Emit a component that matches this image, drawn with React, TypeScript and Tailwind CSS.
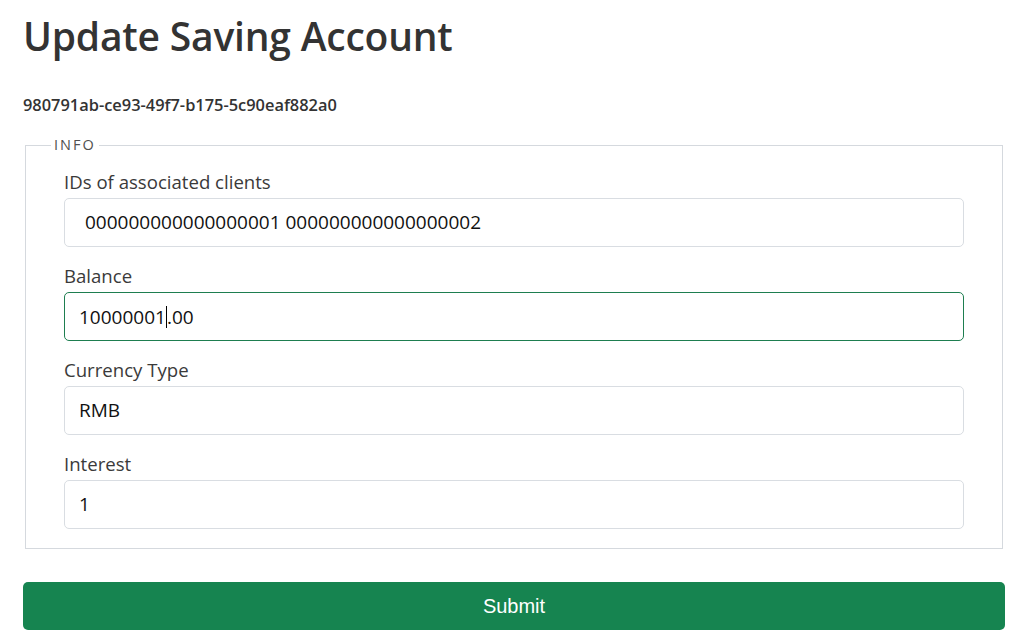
import React from 'react';

const fields = [
  { id: 'clients', label: 'IDs of associated clients', value: '000000000000000001 000000000000000002', indent: true },
  { id: 'balance', label: 'Balance', value: '10000001.00', focused: true },
  { id: 'currency', label: 'Currency Type', value: 'RMB' },
  { id: 'interest', label: 'Interest', value: '1' },
];

export default function App() {
  return (
    <div
      className="min-h-screen bg-white pl-[23px] pr-[27px] pt-[8px] text-[#333333]"
      style={{ fontFamily: '"Open Sans", "Noto Sans", sans-serif' }}
    >
      {/* Title */}
      <h1 className="text-[39px] font-semibold leading-[56px] tracking-[-0.2px] text-[#333333]">
        Update Saving Account
      </h1>
      <p className="mt-[29px] text-[16.4px] font-semibold leading-[24px] text-[#333333]">
        980791ab-ce93-49f7-b175-5c90eaf882a0
      </p>

      {/* Info fieldset */}
      <fieldset className="mx-[2px] mt-[20px] border border-[#d5d9de] px-[38px] pb-[19px] pt-[15px]">
        <legend className="-ml-[13px] px-[3px] text-[14.5px] leading-[16px] tracking-[2px] text-[#505050]">
          INFO
        </legend>
        <div className="flex flex-col gap-[15px]">
          {fields.map((f) => (
            <div key={f.id} className="flex flex-col">
              <label className="mb-[3px] text-[18.6px] leading-[27px] text-[#3a3a3a]">{f.label}</label>
              <div
                className={
                  f.focused
                    ? 'flex h-[49px] items-center rounded-[5px] border border-[#1e7e50] px-[14px] text-[19px] text-[#111111]'
                    : 'flex h-[49px] items-center rounded-[5px] border border-[#d9dde2] px-[14px] text-[19px] text-[#111111]'
                }
              >
                {f.focused ? (
                  <span className="whitespace-pre">
                    10000001
                    <span className="inline-block h-[22px] w-[1px] translate-y-[4px] bg-black" />
                    .00
                  </span>
                ) : (
                  <span className={f.indent ? 'ml-[6px] whitespace-pre' : 'whitespace-pre'}>{f.value}</span>
                )}
              </div>
            </div>
          ))}
        </div>
      </fieldset>

      {/* Submit */}
      <button
        className="mt-[33px] h-[48px] w-full rounded-[5px] bg-[#168450] text-[20px] text-white"
        style={{ fontFamily: '"Liberation Sans", Arial, sans-serif' }}
      >
        Submit
      </button>
    </div>
  );
}
